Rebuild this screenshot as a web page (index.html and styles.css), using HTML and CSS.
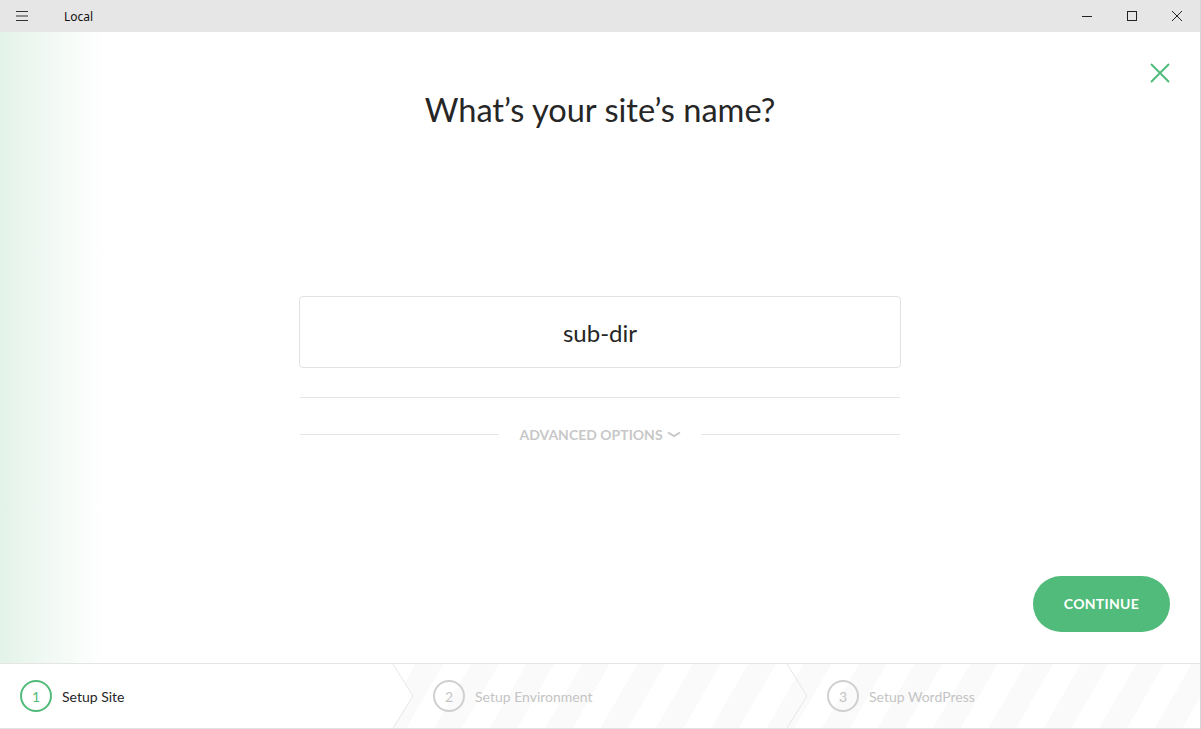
FILE: index.html
```html
<!DOCTYPE html>
<html lang="en">
<head>
    <meta charset="UTF-8">
    <title>Local</title>
    <link rel="stylesheet" href="styles.css">
</head>
<body>
<div class="window">
    <div class="titlebar">
        <div class="titlebar-left">
            <svg class="menu-icon" width="12" height="10" viewBox="0 0 12 10">
                <path d="M0 0.5H12M0 5H12M0 9.5H12" stroke="#333" stroke-width="1"/>
            </svg>
            <span class="app-name">Local</span>
        </div>
        <div class="win-controls">
            <span class="win-btn">
                <svg width="12" height="12" viewBox="0 0 12 12"><path d="M1 6.5H11" stroke="#222" stroke-width="1"/></svg>
            </span>
            <span class="win-btn">
                <svg width="12" height="12" viewBox="0 0 12 12"><rect x="1.5" y="1.5" width="9" height="9" fill="none" stroke="#222" stroke-width="1"/></svg>
            </span>
            <span class="win-btn">
                <svg width="12" height="12" viewBox="0 0 12 12"><path d="M1 1L11 11M11 1L1 11" stroke="#222" stroke-width="1"/></svg>
            </span>
        </div>
    </div>

    <div class="main">
        <button class="close-btn" title="Close">
            <svg width="20" height="20" viewBox="0 0 20 20"><path d="M1 1L19 19M19 1L1 19" stroke="#51bb7b" stroke-width="2"/></svg>
        </button>

        <h1 class="title">What’s your site’s name?</h1>

        <div class="form">
            <input class="site-input" type="text" value="sub-dir">
            <div class="divider"></div>
            <div class="advanced">
                <span class="adv-line"></span>
                <span class="adv-label">
                    ADVANCED OPTIONS
                    <svg width="14" height="7" viewBox="0 0 14 7"><path d="M1 1.5L7 5L13 1.5" fill="none" stroke="#c8c8c8" stroke-width="2"/></svg>
                </span>
                <span class="adv-line"></span>
            </div>
        </div>

        <div class="actions">
            <button class="continue-btn">CONTINUE</button>
        </div>
    </div>

    <div class="steps">
        <div class="step step-active">
            <span class="step-num">1</span>
            <span class="step-label">Setup Site</span>
        </div>
        <div class="step">
            <svg class="chevron" width="20" height="64" viewBox="0 0 20 64">
                <polygon points="0,0 20,32 0,64" fill="#fff"/>
                <path d="M0 0L20 32L0 64" fill="none" stroke="#e6e6e6" stroke-width="1"/>
            </svg>
            <span class="step-num">2</span>
            <span class="step-label">Setup Environment</span>
        </div>
        <div class="step">
            <svg class="chevron" width="20" height="64" viewBox="0 0 20 64">
                <path d="M0 0L20 32L0 64" fill="none" stroke="#e6e6e6" stroke-width="1"/>
            </svg>
            <span class="step-num">3</span>
            <span class="step-label">Setup WordPress</span>
        </div>
    </div>
</div>
</body>
</html>
```

FILE: styles.css
```css
* {
    box-sizing: border-box;
}
html, body {
    margin: 0;
    height: 100%;
}
body {
    font-family: Lato, "Open Sans", sans-serif;
    background: #fff;
    color: #262626;
}
.window {
    width: 1201px;
    height: 729px;
    display: flex;
    flex-direction: column;
    border-right: 1px solid #d6d6d6;
}

/* title bar */
.titlebar {
    height: 32px;
    background: #e6e6e6;
    display: flex;
    justify-content: space-between;
    align-items: center;
}
.titlebar-left {
    display: flex;
    align-items: center;
}
.menu-icon {
    margin-left: 16px;
}
.app-name {
    margin-left: 36px;
    font-family: "Noto Sans", "Open Sans", sans-serif;
    font-size: 12px;
    color: #111;
}
.win-controls {
    display: flex;
}
.win-btn {
    width: 44px;
    height: 32px;
    display: flex;
    align-items: center;
    justify-content: center;
    margin-right: 1px;
}

/* main */
.main {
    position: relative;
    flex: 1;
    display: flex;
    flex-direction: column;
    align-items: center;
    background: linear-gradient(to right, #e3f3e9 0, #f4faf6 60px, #fff 105px);
}
.close-btn {
    position: absolute;
    top: 31px;
    right: 30px;
    padding: 0;
    border: none;
    background: none;
    cursor: pointer;
    line-height: 0;
}
.title {
    margin: 58px 0 0;
    height: 40px;
    line-height: 40px;
    font-size: 32.6px;
    font-weight: 400;
    color: #262626;
}
.form {
    width: 602px;
    margin-top: 166px;
    display: flex;
    flex-direction: column;
    align-items: center;
}
.site-input {
    width: 602px;
    height: 72px;
    border: 1px solid #e2e2e2;
    border-radius: 4px;
    text-align: center;
    font-family: Lato, "Open Sans", sans-serif;
    font-size: 24px;
    color: #262626;
    outline: none;
}
.divider {
    width: 600px;
    height: 1px;
    background: #e5e5e5;
    margin-top: 29px;
}
.advanced {
    width: 600px;
    margin-top: 26px;
    height: 20px;
    display: flex;
    align-items: center;
}
.adv-line {
    flex: 1;
    height: 1px;
    background: #e5e5e5;
}
.adv-label {
    padding: 0 20px;
    display: flex;
    align-items: center;
    gap: 4px;
    font-size: 14px;
    font-weight: 700;
    color: #c8c8c8;
    white-space: nowrap;
}
.actions {
    margin-top: auto;
    align-self: stretch;
    display: flex;
    justify-content: flex-end;
    padding: 0 30px 31px 0;
}
.continue-btn {
    width: 137px;
    height: 56px;
    padding-bottom: 2px;
    border: none;
    border-radius: 28px;
    background: #51bb7b;
    color: #fff;
    font-family: Lato, "Open Sans", sans-serif;
    font-size: 14px;
    font-weight: 700;
    letter-spacing: 0.3px;
    cursor: pointer;
}

/* steps footer */
.steps {
    height: 66px;
    display: flex;
    border-top: 1px solid #e5e5e5;
    border-bottom: 1px solid #e2e2e2;
    background: repeating-linear-gradient(120deg, #fff 0 24px, #fafafa 24px 48px);
}
.step {
    display: flex;
    align-items: center;
    width: 394px;
    font-size: 14px;
    color: #c4c4c4;
}
.step:last-child {
    flex: 1;
}
.step-active {
    width: 393px;
    background: #fff;
    color: #262626;
}
.chevron {
    flex-shrink: 0;
    margin-right: 20px;
}
.step-num {
    width: 32px;
    height: 32px;
    border: 2px solid #cfcfcf;
    border-radius: 50%;
    display: flex;
    align-items: center;
    justify-content: center;
    font-size: 14px;
    color: #c4c4c4;
    margin-right: 10px;
}
.step-active .step-num {
    margin-left: 20px;
    border-color: #51bb7b;
    color: #51bb7b;
}
```
